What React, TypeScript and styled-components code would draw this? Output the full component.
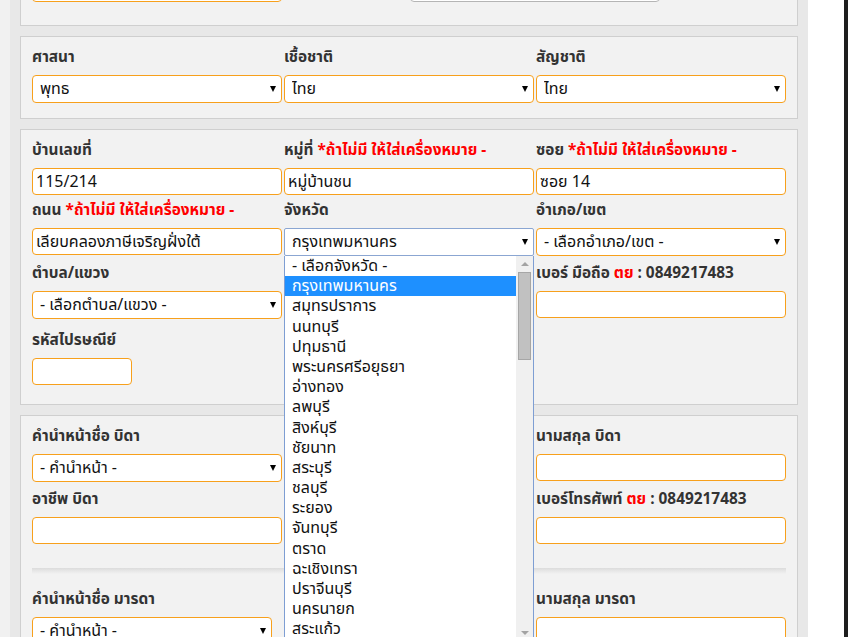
import React from 'react';
import styled, { createGlobalStyle } from 'styled-components';

const GlobalStyle = createGlobalStyle`
  html, body { margin: 0; padding: 0; }
  body {
    background: #f1f1f1;
    font-family: Tahoma, "Noto Sans Thai", "Leelawadee UI", Loma, Garuda, "Noto Sans", "DejaVu Sans", sans-serif;
    font-size: 14px;
    color: #333;
    overflow: hidden;
  }
`;

const provinces = [
  '- เลือกจังหวัด -',
  'กรุงเทพมหานคร',
  'สมุทรปราการ',
  'นนทบุรี',
  'ปทุมธานี',
  'พระนครศรีอยุธยา',
  'อ่างทอง',
  'ลพบุรี',
  'สิงห์บุรี',
  'ชัยนาท',
  'สระบุรี',
  'ชลบุรี',
  'ระยอง',
  'จันทบุรี',
  'ตราด',
  'ฉะเชิงเทรา',
  'ปราจีนบุรี',
  'นครนายก',
  'สระแก้ว',
];

const Screen = styled.div`
  display: flex;
  width: 848px;
  height: 637px;
  overflow: hidden;
`;

const Sheet = styled.div`
  margin-left: 10px;
  width: 798px;
  flex-shrink: 0;
  background: #e8e8e8;
  padding: 0 10px;
  box-sizing: border-box;
`;

const Gutter = styled.div`
  width: 36px;
  flex-shrink: 0;
  background: #fff;
`;

const Edge = styled.div`
  flex: 1;
  background: #1e1e1e;
`;

const Panel = styled.div<{ $pt?: number; $pb?: number; $mt?: number }>`
  background: #f2f2f2;
  border: 1px solid #cfcfcf;
  padding: ${p => p.$pt ?? 10}px 10px ${p => p.$pb ?? 15}px 11px;
  margin-top: ${p => p.$mt ?? 0}px;
  margin-bottom: 10px;
`;

const Row = styled.div<{ $mb?: number }>`
  display: grid;
  grid-template-columns: repeat(3, 250px);
  column-gap: 2px;
  margin-bottom: ${p => p.$mb ?? 0}px;
`;

const Field = styled.div`
  position: relative;
`;

const Label = styled.label`
  display: block;
  height: 20px;
  line-height: 22px;
  margin-bottom: 8px;
  font-size: 15.4px;
  font-weight: bold;
  white-space: nowrap;
  color: #333;
`;

const Red = styled.span`
  color: #f00;
`;

const TextInput = styled.input<{ $w?: number }>`
  display: block;
  width: ${p => (p.$w ? `${p.$w}px` : '100%')};
  height: 27px;
  box-sizing: border-box;
  border: 1px solid #f7a01c;
  border-radius: 4px;
  padding: 0 3px;
  background: #fff;
  font-family: inherit;
  font-size: 16px;
  color: #111;
  outline: none;
`;

const GhostBox = styled.div`
  margin-left: 126px;
  width: 250px;
  height: 27px;
  box-sizing: border-box;
  border: 1px solid #b5b5b5;
  border-radius: 4px;
  background: #fff;
`;

const SelectWrap = styled.div<{ $w?: number }>`
  position: relative;
  width: ${p => (p.$w ? `${p.$w}px` : '100%')};

  &::after {
    content: '';
    position: absolute;
    right: 6px;
    top: 11px;
    border-left: 3.5px solid transparent;
    border-right: 3.5px solid transparent;
    border-top: 6px solid #000;
    pointer-events: none;
  }
`;

const Select = styled.select<{ $focus?: boolean }>`
  display: block;
  width: 100%;
  height: 28px;
  box-sizing: border-box;
  appearance: none;
  -webkit-appearance: none;
  border: 1px solid ${p => (p.$focus ? '#8ba6d2' : '#f7a01c')};
  border-radius: ${p => (p.$focus ? 2 : 4)}px;
  padding: 0 20px 0 7px;
  background: #fff;
  font-family: inherit;
  font-size: 16px;
  color: #111;
  outline: none;
`;

const Dropdown = styled.div`
  position: absolute;
  left: 0;
  top: 28px;
  width: 250px;
  height: 386px;
  box-sizing: border-box;
  border: 1px solid #7e9ed3;
  border-top: none;
  background: #fff;
  display: flex;
  z-index: 5;
`;

const OptionList = styled.ul`
  flex: 1;
  margin: 0;
  padding: 0;
  list-style: none;
`;

const OptionItem = styled.li<{ $active?: boolean }>`
  height: 20.2px;
  line-height: 21px;
  padding-left: 7px;
  font-size: 16px;
  white-space: nowrap;
  color: ${p => (p.$active ? '#fff' : '#111')};
  background: ${p => (p.$active ? '#1e90ff' : 'transparent')};
`;

const ScrollTrack = styled.div`
  width: 17px;
  background: #f0f0f0;
  display: flex;
  flex-direction: column;
  align-items: center;
`;

const ScrollArrow = styled.div<{ $down?: boolean }>`
  height: 16px;
  width: 17px;
  display: flex;
  align-items: center;
  justify-content: center;

  &::before {
    content: '';
    border-left: 4px solid transparent;
    border-right: 4px solid transparent;
    ${p => (p.$down ? 'border-top: 4px solid #a3a3a3;' : 'border-bottom: 4px solid #a3a3a3;')}
  }
`;

const ScrollThumb = styled.div`
  width: 13px;
  height: 88px;
  box-sizing: border-box;
  border: 1px solid #a6a6a6;
  background: #c1c1c1;
`;

const ScrollSpace = styled.div`
  flex: 1;
`;

const Divider = styled.div`
  height: 6px;
  margin: 24px 0 15px;
  width: 754px;
  background: linear-gradient(to bottom, #dcdcdc, rgba(242, 242, 242, 0));
`;

const App: React.FC = () => {
  return (
    <>
      <GlobalStyle />
      <Screen>
        <Sheet>
          <Panel $mt={-64} $pb={23}>
            <Row>
              <Field>
                <Label>&nbsp;</Label>
                <TextInput defaultValue="" />
              </Field>
              <Field>
                <Label>&nbsp;</Label>
                <GhostBox />
              </Field>
            </Row>
          </Panel>

          <Panel>
            <Row>
              <Field>
                <Label>ศาสนา</Label>
                <SelectWrap>
                  <Select defaultValue="พุทธ">
                    <option>พุทธ</option>
                  </Select>
                </SelectWrap>
              </Field>
              <Field>
                <Label>เชื้อชาติ</Label>
                <SelectWrap>
                  <Select defaultValue="ไทย">
                    <option>ไทย</option>
                  </Select>
                </SelectWrap>
              </Field>
              <Field>
                <Label>สัญชาติ</Label>
                <SelectWrap>
                  <Select defaultValue="ไทย">
                    <option>ไทย</option>
                  </Select>
                </SelectWrap>
              </Field>
            </Row>
          </Panel>

          <Panel $pb={19}>
            <Row $mb={5}>
              <Field>
                <Label>บ้านเลขที่</Label>
                <TextInput defaultValue="115/214" />
              </Field>
              <Field>
                <Label>
                  หมู่ที่ <Red>*ถ้าไม่มี ให้ใส่เครื่องหมาย -</Red>
                </Label>
                <TextInput defaultValue="หมู่บ้านชน" />
              </Field>
              <Field>
                <Label>
                  ซอย <Red>*ถ้าไม่มี ให้ใส่เครื่องหมาย -</Red>
                </Label>
                <TextInput defaultValue="ซอย 14" />
              </Field>
            </Row>
            <Row $mb={7}>
              <Field>
                <Label>
                  ถนน <Red>*ถ้าไม่มี ให้ใส่เครื่องหมาย -</Red>
                </Label>
                <TextInput defaultValue="เลียบคลองภาษีเจริญฝั่งใต้" />
              </Field>
              <Field>
                <Label>จังหวัด</Label>
                <SelectWrap>
                  <Select $focus defaultValue="กรุงเทพมหานคร">
                    <option>กรุงเทพมหานคร</option>
                  </Select>
                  <Dropdown>
                    <OptionList>
                      {provinces.map((name, i) => (
                        <OptionItem key={name} $active={i === 1}>
                          {name}
                        </OptionItem>
                      ))}
                    </OptionList>
                    <ScrollTrack>
                      <ScrollArrow />
                      <ScrollThumb />
                      <ScrollSpace />
                      <ScrollArrow $down />
                    </ScrollTrack>
                  </Dropdown>
                </SelectWrap>
              </Field>
              <Field>
                <Label>อำเภอ/เขต</Label>
                <SelectWrap>
                  <Select defaultValue="- เลือกอำเภอ/เขต -">
                    <option>- เลือกอำเภอ/เขต -</option>
                  </Select>
                </SelectWrap>
              </Field>
            </Row>
            <Row $mb={11}>
              <Field>
                <Label>ตำบล/แขวง</Label>
                <SelectWrap>
                  <Select defaultValue="- เลือกตำบล/แขวง -">
                    <option>- เลือกตำบล/แขวง -</option>
                  </Select>
                </SelectWrap>
              </Field>
              <Field />
              <Field>
                <Label>
                  เบอร์ มือถือ <Red>ตย</Red> : 0849217483
                </Label>
                <TextInput />
              </Field>
            </Row>
            <Row>
              <Field>
                <Label>รหัสไปรษณีย์</Label>
                <TextInput $w={100} />
              </Field>
            </Row>
          </Panel>

          <Panel>
            <Row $mb={7}>
              <Field>
                <Label>คำนำหน้าชื่อ บิดา</Label>
                <SelectWrap>
                  <Select defaultValue="- คำนำหน้า -">
                    <option>- คำนำหน้า -</option>
                  </Select>
                </SelectWrap>
              </Field>
              <Field>
                <Label>&nbsp;</Label>
                <TextInput />
              </Field>
              <Field>
                <Label>นามสกุล บิดา</Label>
                <TextInput />
              </Field>
            </Row>
            <Row>
              <Field>
                <Label>อาชีพ บิดา</Label>
                <TextInput />
              </Field>
              <Field>
                <Label>&nbsp;</Label>
                <TextInput />
              </Field>
              <Field>
                <Label>
                  เบอร์โทรศัพท์ <Red>ตย</Red> : 0849217483
                </Label>
                <TextInput />
              </Field>
            </Row>
            <Divider />
            <Row>
              <Field>
                <Label>คำนำหน้าชื่อ มารดา</Label>
                <SelectWrap $w={240}>
                  <Select defaultValue="- คำนำหน้า -">
                    <option>- คำนำหน้า -</option>
                  </Select>
                </SelectWrap>
              </Field>
              <Field>
                <Label>&nbsp;</Label>
                <TextInput />
              </Field>
              <Field>
                <Label>นามสกุล มารดา</Label>
                <TextInput />
              </Field>
            </Row>
          </Panel>
        </Sheet>
        <Gutter />
        <Edge />
      </Screen>
    </>
  );
};

export default App;
